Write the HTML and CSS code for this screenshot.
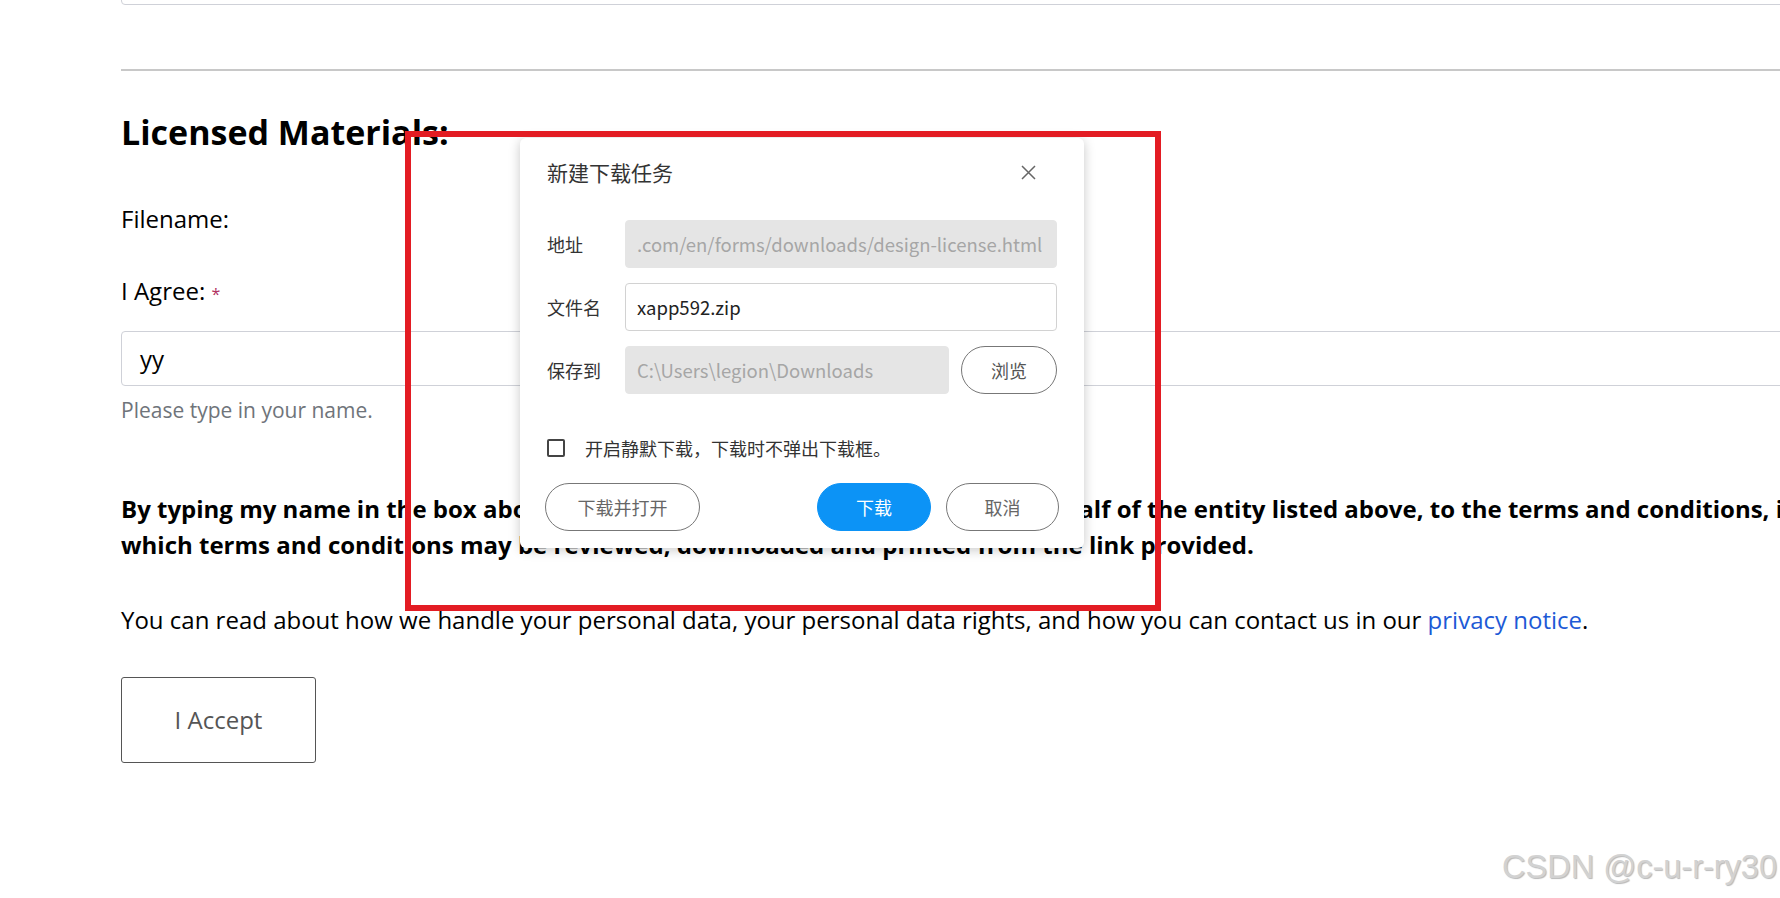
FILE: index.html
```html
<!DOCTYPE html>
<html lang="en">
  <head>
    <meta charset="UTF-8" />
    <meta name="viewport" content="width=device-width, initial-scale=1.0" />
    <title>Design License</title>
    <link rel="stylesheet" href="styles.css">
  </head>
  <body>
    <div class="page">
      <div class="prev-field"></div>
      <hr class="divider" />

      <h2 class="section-title">Licensed Materials:</h2>

      <div class="field-label">Filename:</div>

      <div class="field-label agree-label">I Agree: <span class="required">*</span></div>
      <div class="text-input">yy</div>
      <div class="help-text">Please type in your name.</div>

      <p class="terms">
        By typing my name in the box above, I agree, both on my own behalf and on behalf of the entity listed above, to the terms and conditions, including the Export Restrictions set forth in the link above,<br />
        which terms and conditions may be reviewed, downloaded and printed from the link provided.
      </p>

      <p class="privacy">
        You can read about how we handle your personal data, your personal data rights, and how you can contact us in our <a href="#" class="link">privacy notice</a>.
      </p>

      <button class="accept-btn">I Accept</button>
    </div>

    <div class="dialog">
      <div class="dialog-head">
        <span class="dialog-title">新建下载任务</span>
        <span class="dialog-close">
          <svg width="15" height="15" viewBox="0 0 15 15">
            <path d="M1 1 L14 14 M14 1 L1 14" stroke="#666" stroke-width="1.5" fill="none" />
          </svg>
        </span>
      </div>

      <div class="dialog-form">
        <div class="form-row">
          <span class="form-label">地址</span>
          <div class="form-input is-disabled">.com/en/forms/downloads/design-license.html</div>
        </div>
        <div class="form-row">
          <span class="form-label">文件名</span>
          <div class="form-input">xapp592.zip</div>
        </div>
        <div class="form-row">
          <span class="form-label">保存到</span>
          <div class="form-input is-disabled path-input">C:\Users\legion\Downloads</div>
          <button class="pill-btn browse-btn">浏览</button>
        </div>
      </div>

      <label class="silent-row">
        <span class="checkbox"></span>
        <span>开启静默下载，下载时不弹出下载框。</span>
      </label>

      <div class="dialog-actions">
        <button class="pill-btn open-btn">下载并打开</button>
        <button class="pill-btn primary-btn">下载</button>
        <button class="pill-btn cancel-btn">取消</button>
      </div>
    </div>

    <div class="mark-box"></div>
    <div class="watermark">CSDN @c-u-r-ry30</div>
  </body>
</html>
```

FILE: styles.css
```css
* {
  margin: 0;
  padding: 0;
  box-sizing: border-box;
}

html,
body {
  width: 100vw;
  height: 100vh;
  overflow: hidden;
  background: #fff;
}

body {
  position: relative;
  font-family: "Open Sans", "Noto Sans", sans-serif;
  color: #000;
}

.page {
  width: 1900px;
  padding-left: 121px;
}

.prev-field {
  height: 56px;
  margin-top: -51px;
  border: 1px solid #cfd1d8;
  border-radius: 4px;
}

.divider {
  height: 2px;
  margin-top: 64px;
  border: none;
  background: #c8c8c8;
}

.section-title {
  margin-top: 37px;
  font-size: 34px;
  line-height: 48px;
  font-weight: 700;
}

.field-label {
  margin-top: 47px;
  font-size: 24px;
  line-height: 32px;
}

.agree-label {
  margin-top: 40px;
}

.required {
  color: #b03060;
  font-size: 16px;
  vertical-align: middle;
}

.text-input {
  height: 55px;
  margin-top: 21px;
  padding-left: 18px;
  border: 1px solid #cfd1d8;
  border-radius: 4px;
  font-size: 24px;
  line-height: 53px;
}

.help-text {
  margin-top: 10px;
  font-size: 21px;
  line-height: 28px;
  color: #6f747a;
}

.terms {
  margin-top: 67px;
  font-size: 24px;
  line-height: 36px;
  font-weight: 700;
  white-space: nowrap;
}

.privacy {
  margin-top: 41px;
  font-size: 24px;
  line-height: 32px;
}

.link {
  color: #1d5ad6;
  text-decoration: none;
}

.accept-btn {
  display: block;
  width: 195px;
  height: 86px;
  margin-top: 41px;
  border: 1px solid #555;
  border-radius: 3px;
  background: #fff;
  font-family: "Open Sans", sans-serif;
  font-size: 24px;
  color: #555;
}

/* download dialog */
.dialog {
  position: absolute;
  left: 520px;
  top: 138px;
  width: 564px;
  height: 410px;
  padding: 16px 27px 17px 27px;
  background: #fff;
  border-radius: 6px;
  box-shadow: 0 2px 12px rgba(0, 0, 0, 0.22);
  font-family: "Noto Sans CJK SC", "Noto Sans", sans-serif;
  color: #333;
}

.dialog-head {
  display: flex;
  align-items: center;
  justify-content: space-between;
  height: 36px;
}

.dialog-title {
  font-size: 21px;
}

.dialog-close {
  display: flex;
  margin-right: 21px;
}

.dialog-form {
  display: flex;
  flex-direction: column;
  gap: 15px;
  margin-top: 30px;
}

.form-row {
  display: flex;
  align-items: center;
  height: 48px;
}

.form-label {
  width: 78px;
  font-size: 18px;
}

.form-input {
  flex: 1;
  height: 48px;
  padding-left: 11px;
  border: 1px solid #d2d2d2;
  border-radius: 4px;
  font-size: 18.5px;
  line-height: 46px;
  color: #222;
  white-space: nowrap;
  overflow: hidden;
}

.form-input.is-disabled {
  background: #e5e5e5;
  border-color: #e5e5e5;
  color: #a6a6a6;
}

.path-input {
  flex: none;
  width: 324px;
}

.pill-btn {
  height: 48px;
  border: 1px solid #777;
  border-radius: 24px;
  background: #fff;
  font-family: "Noto Sans CJK SC", sans-serif;
  font-size: 18px;
  color: #555;
}

.browse-btn {
  width: 96px;
  margin-left: 12px;
}

.silent-row {
  display: flex;
  align-items: center;
  gap: 20px;
  height: 20px;
  margin-top: 44px;
  font-size: 18px;
}

.checkbox {
  flex: none;
  width: 18px;
  height: 18px;
  border: 2px solid #444;
  border-radius: 2px;
}

.dialog-actions {
  display: flex;
  margin-top: 25px;
}

.open-btn {
  width: 155px;
  margin-left: -2px;
  color: #666;
}

.primary-btn {
  width: 114px;
  margin-left: auto;
  border-color: #0c93f6;
  background: #0c93f6;
  color: #fff;
}

.cancel-btn {
  width: 113px;
  margin-left: 15px;
  margin-right: -2px;
  color: #666;
}

/* screenshot annotation */
.mark-box {
  position: absolute;
  left: 405px;
  top: 131px;
  width: 756px;
  height: 480px;
  border: 6px solid #e31c23;
  pointer-events: none;
}

.watermark {
  position: absolute;
  right: 3px;
  top: 847px;
  font-family: "Liberation Sans", Arial, sans-serif;
  font-size: 32.5px;
  line-height: 40px;
  color: #d2d2d2;
  text-shadow: 1px 1px 1px #b8b8b8;
}
```
